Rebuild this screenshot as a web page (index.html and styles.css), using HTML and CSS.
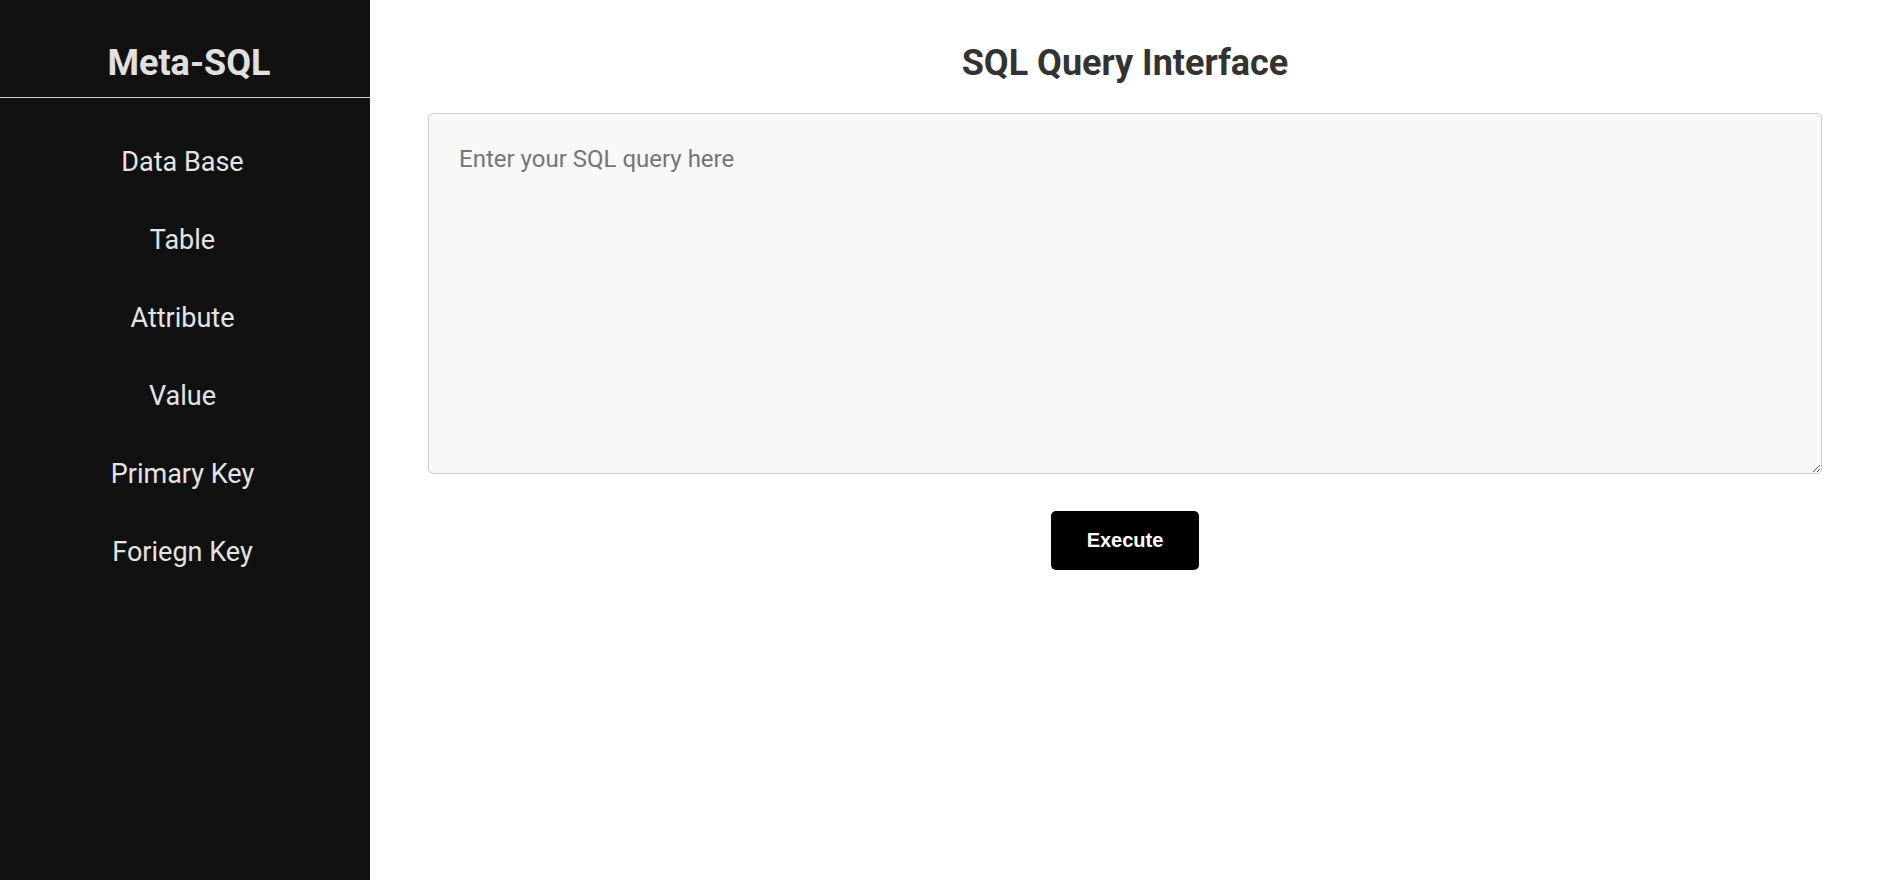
FILE: index.html
```html
<!DOCTYPE html>
<html lang="en">
<head>
<meta charset="utf-8">
<title>Meta-SQL</title>
<link rel="stylesheet" href="styles.css">
</head>
<body>
<div class="app">
  <aside class="sidebar">
    <div class="brand">Meta-SQL</div>
    <nav class="nav">
      <a class="nav-item" href="#">Data Base</a>
      <a class="nav-item" href="#">Table</a>
      <a class="nav-item" href="#">Attribute</a>
      <a class="nav-item" href="#">Value</a>
      <a class="nav-item" href="#">Primary Key</a>
      <a class="nav-item" href="#">Foriegn Key</a>
    </nav>
  </aside>
  <main class="main">
    <h1 class="title">SQL Query Interface</h1>
    <textarea class="query" placeholder="Enter your SQL query here"></textarea>
    <button class="execute" type="button">Execute</button>
  </main>
</div>
</body>
</html>
```

FILE: styles.css
```css
html, body {
  margin: 0;
  padding: 0;
  height: 100%;
  background: #ffffff;
  font-family: Roboto, "Liberation Sans", sans-serif;
}

.app {
  display: flex;
  min-height: 100vh;
}

.sidebar {
  width: 370px;
  flex-shrink: 0;
  background: #111111;
  display: flex;
  flex-direction: column;
}

.brand {
  padding: 42px 0 13px 8px;
  border-bottom: 1px solid #cfcfcf;
  text-align: center;
  font-size: 36px;
  font-weight: 700;
  color: #e0e0e0;
}

.nav {
  display: flex;
  flex-direction: column;
  padding-top: 25px;
}

.nav-item {
  display: block;
  padding: 24px 5px 24px 0;
  line-height: 30px;
  font-size: 27px;
  color: #e4e4e4;
  text-decoration: none;
  text-align: center;
}

.main {
  flex: 1;
  display: flex;
  flex-direction: column;
  align-items: center;
  padding: 42px 55px 0 58px;
}

.title {
  margin: 0 0 29px;
  font-size: 36px;
  font-weight: 700;
  color: #333333;
  line-height: normal;
}

.query {
  display: block;
  width: 100%;
  height: 361px;
  box-sizing: border-box;
  padding: 31px 30px 30px;
  border: 1px solid #cccccc;
  border-radius: 5px;
  background: #f8f8f8;
  font-family: Roboto, sans-serif;
  font-size: 24px;
  color: #333333;
  outline: none;
}

.query::placeholder {
  color: #757575;
}

.execute {
  margin-top: 37px;
  height: 59px;
  padding: 0 36px;
  border: none;
  border-radius: 5px;
  background: #000000;
  color: #ffffff;
  font-family: "Liberation Sans", Arial, sans-serif;
  font-size: 20px;
  font-weight: 700;
  cursor: pointer;
}
```
